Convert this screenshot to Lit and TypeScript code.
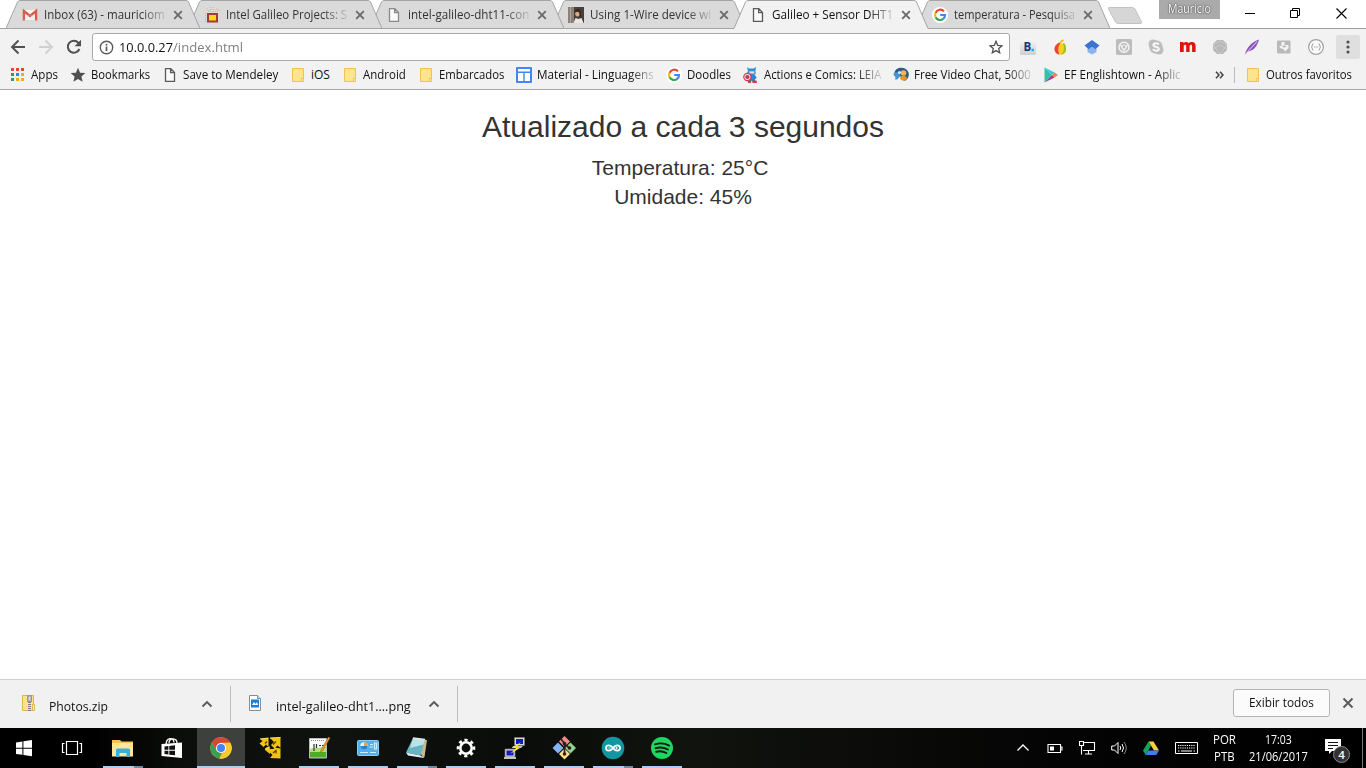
import { LitElement, html, svg, css, nothing } from "lit";
import { customElement, property } from "lit/decorators.js";
import { classMap } from "lit/directives/class-map.js";

/* A label whose glyphs are condensed or widened to fill a given width. */
@customElement("fit-text")
class FitText extends LitElement {
  @property({ type: Number }) w = 0;
  @property() text = "";
  static styles = css`
    :host { display: inline-block; white-space: pre; flex: none; }
    span { display: inline-block; transform-origin: 0 50%; }
  `;
  render() {
    return html`<span>${this.text}</span>`;
  }
  updated() {
    const el = this.renderRoot.querySelector("span") as HTMLElement;
    this.style.width = this.w + "px";
    el.style.transform = `scaleX(${this.w / el.offsetWidth})`;
  }
}

const icon = (w: number, h: number, body: unknown) =>
  html`<svg width=${w} height=${h} viewBox="0 0 ${w} ${h}">${body}</svg>`;

const docIcon = (c: string) => icon(16, 16, svg`<path d="M3.5 1.7h5.3l3.7 3.8v8.8h-9zM8.6 1.7v4h3.9" fill="#fafafa" stroke=${c} stroke-width="1.3"/>`);
const googleIcon = icon(16, 16, svg`<circle cx="8" cy="8" r="8" fill="#fff"/>
  <g fill="none" stroke-width="2.2"><path d="M12 4.4A5 5 0 0 0 3.6 5.8" stroke="#ea4335"/><path d="M3.6 5.7a5 5 0 0 0 0 4.6" stroke="#fbbc05"/><path d="M3.6 10.2a5 5 0 0 0 7.7 1.6" stroke="#34a853"/><path d="M11.2 11.9A5 5 0 0 0 13 8H8.2" stroke="#4285f4"/></g>`);
const gmailIcon = icon(16, 16, svg`<path d="M2 3h12v10H2z" fill="#f4f4f4"/><path d="M1.9 13.5V4L8 9l6.1-5v9.5" fill="none" stroke="#db5a4b" stroke-width="2.3"/><path d="M3 12.6l3.6-4M13 12.6l-3.6-4" stroke="#ddd"/>`);
const chipIcon = icon(16, 16, svg`<rect x="3" y="6" width="11" height="9.500" fill="#a33b35"/><rect x="5" y="8" width="7" height="5.500" fill="#ffd51e"/><path d="M3 1l2 4M6 0l1 5M9 5V0M11 5l2-4M1.500 6v9M15 2l-2 3" stroke="#dfb070" stroke-dasharray="1 1"/>`);
const photoIcon = icon(16, 16, svg`<path d="M0 0h16v16H0z" fill="#4a403a"/><path d="M0 0h6v16H0z" fill="#8d8277"/><path d="M2 0h1v16H2z" fill="#b0a698"/><ellipse cx="9.6" cy="6" rx="2.5" ry="3.4" fill="#d9a98e"/><path d="M6.5 6c0-5 6-5 6.2-1 .4 4 .6 6 .6 6l-1.8-2c.8-4-2-5-3-4z" fill="#37241d"/><path d="M5.5 16l2-5 3 1 3-1 2 5z" fill="#ede7e4"/>`);
const folderIcon = icon(16, 16, svg`<path d="M2.500 1.500h11v13h-11z" fill="#ffe48e" stroke="#ecc550"/><path d="M11.500 11.500h2v3h-2z" fill="#fff0b8" stroke="#ecc550"/><path d="M14.500 10v5" stroke="#f2f2f2"/>`);
const appsIcon = icon(16, 16, svg`${["#ea4335", "#ea4335", "#ea4335", "#2f9e57", "#2a86f0", "#f9ab11", "#2f9e57", "#f9ab11", "#f9ab11"].map(
  (c, i) => svg`<rect x=${1 + (i % 3) * 5} y=${1 + Math.floor(i / 3) * 5} width="3" height="3" fill=${c}/>`)}`);
const starSolid = icon(16, 16, svg`<path d="M8 .8l2.1 4.9 5.3.4-4 3.5 1.2 5.2L8 12l-4.6 2.8 1.2-5.2-4-3.5 5.3-.4z" fill="#4f4f4f"/>`);
const tableIcon = icon(16, 16, svg`<rect width="16" height="16" rx="1" fill="#4285f4"/><path d="M2 2h12v2.500H2zM2 6h5.300v8H2zM8.700 6H14v8H8.700z" fill="#fff"/>`);
const captainIcon = icon(16, 16, svg`<path d="M4 0l2 1.400h4.500L13 0l-.6 4 .4 3-3 1.500h-3L4.200 6 5 4z" fill="#2c8fe0"/><path d="M6.300 4.300h5v2.200h-5z" fill="#f5dcc4"/><path d="M5 8h7l1.800 3-1.600 1-.2 3H9.400l-.6-1.600L8 15H5z" fill="#2b86d4"/><path d="M9.500 13.500h4l.5 2.500H9.500zM5 14h3v2H5z" fill="#d53b3f"/><circle cx="4.400" cy="10" r="4.200" fill="#d23b48"/><circle cx="4.400" cy="10" r="3" fill="#f6e7e7"/><circle cx="4.400" cy="10" r="2.100" fill="#c5323e"/><circle cx="4.400" cy="10" r="1" fill="#4f6fae"/>`);
const chatIcon = icon(16, 16, svg`<path d="M1.500 6C2 1 8-.5 12 1.500c4 2.500 5 6 2.600 10L12 14 7 9z" fill="#2d5d83"/><path d="M.6 6L6 5l1.500 4-3.400 3.500L2 12.600 2.500 10 .8 8.500z" fill="#4a96c8"/><circle cx="10.500" cy="6" r="2.800" fill="#f2b35a"/><path d="M7 12c0-4.200 7-4.200 7 0l-3.500 2z" fill="#ee9422"/><circle cx="6.500" cy="5.500" r="1.600" fill="#d3e8f4"/>`);
const playIcon = icon(16, 16, svg`<path d="M1.500.5v15L9 8z" fill="#35bfa7"/><path d="M1.500.5L9 8l2.600-2.400z" fill="#38c8dc"/><path d="M1.500 15.500L9 8l2.600 2.500z" fill="#a53d86"/><path d="M11.600 5.600L15 8l-3.400 2.500L9 8z" fill="#f2814c"/>`);
const closeX = icon(10, 10, svg`<path d="M1.200 1.200l7.600 7.600M8.800 1.200L1.200 8.800" stroke="currentColor" stroke-width="1.900"/>`);
const chevronUp = icon(12, 8, svg`<path d="M1.500 6.500L6 2l4.500 4.500" fill="none" stroke="#5a5a5a" stroke-width="1.900"/>`);

const tabs = [
  { t: "Inbox (63) - mauriciom", i: gmailIcon },
  { t: "Intel Galileo Projects: S", i: chipIcon },
  { t: "intel-galileo-dht11-con", i: docIcon("#8a8a8a") },
  { t: "Using 1-Wire device wi", i: photoIcon },
  { t: "Galileo + Sensor DHT1", i: docIcon("#5a5a5a"), on: true },
  { t: "temperatura - Pesquisa", i: googleIcon },
];

const bookmarks = [
  { t: "Apps", w: 27, i: appsIcon },
  { t: "Bookmarks", w: 59, i: starSolid },
  { t: "Save to Mendeley", w: 95, i: docIcon("#5a5a5a") },
  { t: "iOS", w: 19, i: folderIcon },
  { t: "Android", w: 43, i: folderIcon },
  { t: "Embarcados", w: 65, i: folderIcon },
  { t: "Material - Linguagens", w: 117, i: tableIcon, fade: true },
  { t: "Doodles", w: 44, i: googleIcon },
  { t: "Actions e Comics: LEIA", w: 117, i: captainIcon, fade: true },
  { t: "Free Video Chat, 5000", w: 117, i: chatIcon, fade: true },
  { t: "EF Englishtown - Aplic", w: 117, i: playIcon, fade: true },
];

const extensions = [
  svg`<defs><linearGradient id="bg" x2="0" y2="1"><stop stop-color="#f6f6f6"/><stop offset="1" stop-color="#cfcfcf"/></linearGradient></defs><rect width="16" height="16" rx="1.500" fill="url(#bg)"/><text class="bk" x="3.500" y="12" fill="#0c3b7c">B</text><rect x="11.500" y="9.800" width="2.300" height="2.400" fill="#1ba3e0"/>`,
  svg`<path d="M9 3c-4 1-7 4-6.500 8 .5 3 3 4.500 5.500 4.500-2-4-.5-8 1-12.500z" fill="#ee4136"/><path d="M9 3C5.500 8 5.500 13 8 15.500c4 .5 6.500-2.500 5.500-6C12.700 7 11 6 9 3z" fill="#ffd21f"/><path d="M10.500 4c3.500 0 3.500 3 3.500 6.500S11 15.500 8.500 15.500c4-2.500 4-7 2-11.500z" fill="#9dc41b"/><path d="M8 3.500C8 1.500 10 .3 12 .5 12 2.500 10 3.700 8 3.500z" fill="#e6c32a"/>`,
  svg`<path d="M3.500 7h9v6l-4.500 2.500L3.500 13z" fill="#8ab4ee"/><path d="M8 1l7.500 5.500L11 10.500C10.500 7 5.500 7 5 10.500L.5 6.500z" fill="#3b73d1"/>`,
  svg`<rect width="16" height="16" rx="1.500" fill="#bcbcbc"/><circle cx="8" cy="8.300" r="5" fill="none" stroke="#f4f4f4" stroke-width="1.500"/><path d="M3.500 6L8 13.500 12.500 6z" fill="#e6e6e6"/><circle cx="8" cy="8" r="2" fill="#bcbcbc" stroke="#f4f4f4"/>`,
  svg`<circle cx="5" cy="5" r="4.500" fill="#bdbdbd"/><circle cx="11" cy="11" r="4.500" fill="#bdbdbd"/><circle cx="8" cy="8" r="6.700" fill="#bdbdbd"/><path d="M10.800 5.600C10 3.700 5.400 3.800 5.400 6c0 2.600 5.400 1.300 5.400 4 0 2.200-5 2.300-5.700 0" fill="none" stroke="#fafafa" stroke-width="1.900"/>`,
  svg`<path d="M0 3h3.400v1.200C5 2.600 7.600 2.600 8.600 4.200 10.500 2.200 15.600 2.200 15.600 6.500V13h-3.500V7c0-1.800-2.500-1.500-2.500.3V13H6.200V7c0-1.800-2.500-1.500-2.500.3V13H0z" fill="#e3120b"/>`,
  svg`<path d="M5 1h6l4 4v6l-4 4H5l-4-4V5z" fill="#b8b8b8"/><path d="M1 6l7-4 7 4-7 9zM1 10l7-4 7 4" fill="none" stroke="#cdcdcd" stroke-width=".9"/>`,
  svg`<path d="M1 15C3 8 8 3 15 .5 13.500 7 9.500 12 4 12.500z" fill="#8d55bc"/><path d="M1 15.500L13 2.500" stroke="#d5b9ea" stroke-width="1.100"/>`,
  svg`<rect x="1" y="1.500" width="13.500" height="13" rx="1" fill="#b9b9b9"/><path d="M5.500 3h3v3h4v3L9 12.500 7.500 10 5 9.500 3 7h2.500z" fill="#f4f4f4"/><path d="M8 6v3M6.500 7.500h4" stroke="#b9b9b9"/>`,
  svg`<circle cx="8" cy="8" r="7.400" fill="#fafafa" stroke="#a3a3a3" stroke-width="1.200"/><path d="M5.500 4.800c-2 0-.5 2.500-2.200 3.200 1.700.7.200 3.200 2.200 3.200M10.500 4.800c2 0 .5 2.500 2.200 3.200-1.700.7-.2 3.200-2.200 3.200M6 8h1m.7 0h1m.7 0h.8" fill="none" stroke="#999"/>`,
];

const tasks: { c: string; i: unknown }[] = [
  { c: "first", i: svg`<path d="M4 6.400l6.400-.9v6.200H4zM11.400 5.300L20 4v7.700h-8.600zM4 12.700h6.400v6.100L4 18zM11.400 12.700H20V20.300l-8.600-1.300z" fill="#fff"/>` },
  { c: "second", i: svg`<path d="M6.500 5.500h11v13h-11zM4.500 7.500h-2v9h2M19.500 7.500h2v9h-2" fill="none" stroke="#fff" stroke-width="1.200"/>` },
  { c: "run multi", i: svg`<path d="M1 4h8l1.500 1.500H22V20H1z" fill="#f1c54c"/><path d="M1 7h21v13.500H1z" fill="#ffe69a"/><path d="M5 21v-7q0-1.500 1.500-1.500h11q1.500 0 1.500 1.500v7h-3.500v-4h-7v4z" fill="#35b1e1"/>` },
  { c: "", i: svg`<path d="M1.500 8L22 6.500V22L1.500 20z" fill="#fff"/><path d="M6 9C6 1 14 1 14 6.500M9 7c0-6 8-5 8 0" fill="none" stroke="#fff" stroke-width="1.300"/><path d="M4.500 10.400l3.900-.4v3.800H4.500zM9.300 9.900l5.700-.6v4.500H9.300zM4.500 14.700h3.900v3.800l-3.900-.4zM9.300 14.700H15v4.600l-5.700-.6z" fill="#111"/>` },
  { c: "run current", i: svg`<circle cx="12" cy="12" r="10.700" fill="#fbc02d"/><path d="M2.700 6.700A10.700 10.700 0 0 1 21.300 6.700L12 7.200 7 13.500z" fill="#d84637"/><path d="M2.700 6.700l5 8 5.300 2-2.800 5.900A10.700 10.700 0 0 1 2.700 6.700z" fill="#3a9f50"/><path d="M21.300 6.700H12l4.700 7.300-5.700 8.700A10.700 10.700 0 0 0 21.300 6.700z" fill="#fdc92e"/><circle cx="12" cy="12" r="5" fill="#fff"/><circle cx="12" cy="12" r="4" fill="#4285f4"/>` },
  { c: "", i: svg`<path d="M2 3l8.500-1v9L8 8.500 5.500 11 1.500 7.500 4.500 5zM12 2l10.500-.500V12l-3-2.500-3 3-3.500-3.500 3-3zM7 12.500l4.500-2 .5 2.500h3.500l1-1.500 6 1V22.500L12 22l2.500-3-2.500-2.500v1.500l-5-4z" fill="#f4c40c"/><path d="M2 3l8.500-1M12 2l10.500-.500M7.500 12.500l4-1.500" stroke="#ffe65c"/><path d="M15 17l3-2.500v3M9 5.500l-2 2M18 5.500l-3 3" stroke="#4c3c05" stroke-width="1.200" fill="none"/>` },
  { c: "run", i: svg`<path d="M2.500 2.500h17v19.500h-17z" fill="#f9f9f9" stroke="#b9b9b9"/><path d="M3 13l16-2v10.500H3z" fill="#4cae24"/><path d="M3 13l16-2v5H3z" fill="#b4e077"/><path d="M4 4.500h14" stroke="#888" stroke-dasharray="1 1"/><path d="M7 8v7M9.500 8v4M12 9.500h2m1 0h2" stroke="#333" stroke-width="1.200"/><path d="M21.500 1l1.500 1-7.500 13-2 1.500.5-2.500z" fill="#f1a32c" stroke="#9c5c12" stroke-width=".6"/>` },
  { c: "run", i: svg`<rect x="1.500" y="4.500" width="21" height="15" rx="1" fill="#4fb2ef" stroke="#86cdf8"/><circle cx="8" cy="10" r="3.700" fill="#eef8ff"/><path d="M8 10V6.300A3.700 3.700 0 0 1 11.700 10z" fill="#f2a12d"/><path d="M8 10h-3.700A3.700 3.700 0 0 0 11.700 10z" fill="#2f7fd0"/><path d="M14 8.500h3M13.500 11h3.500M18.500 7h2v6h-2zM4 16.500h8M14 16.500h6" stroke="#d2eeff" stroke-width="1.200" fill="none"/>` },
  { c: "run multi", i: svg`<path d="M8 2.500l14 1.500-2.500 17-1.500 1z" fill="#c9b68b"/><path d="M8 2l12 1.500-4.500 16L1 16.500z" fill="#68b4c3"/><path d="M8 2l12 1.500-1.500 5L5 12z" fill="#b8e3e9"/><path d="M1 16.500l14.500 3 3.500 2.500-16-2.500z" fill="#e7eff0"/><path d="M8 2l12 1.500" stroke="#e6e6e6" stroke-width="1.500"/>` },
  { c: "run", i: svg`<g fill="none" stroke="#fff"><circle cx="12" cy="12" r="5.700" stroke-width="2.600"/><circle cx="12" cy="12" r="8" stroke-width="2.600" stroke-dasharray="3.100 3.183" transform="rotate(-101 12 12)"/></g>` },
  { c: "run", i: svg`<path d="M11.500 1.500h10v8h-10zM2 13h10v8H2z" fill="#d9d9d4" stroke="#77776f" stroke-width=".7"/><path d="M13 3h7v5h-7zM3.500 14.500h7v5h-7z" fill="#1017c7"/><path d="M10 10h10l-2 2h-9zM1 21h12v2H1z" fill="#c4c4bd"/><path d="M18 6l-9 6h4l-6 6 10-6h-4z" fill="#ffe92e"/>` },
  { c: "run", i: svg`<path d="M12.500 0l5.500 5.500-5.500 5.500L7 5.500z" fill="#f28b88"/><path d="M18.500 6.500L24 12l-5.500 5.500L13 12z" fill="#93d391"/><path d="M6 6.500l5.500 5.500L6 17.500.5 12z" fill="#83b4f4"/><path d="M12.500 12.500L18 18l-5.500 5.500L7 18z" fill="#ffe08a"/><path d="M9 3l3.500 4.500V18M12.500 8l5 4" fill="none" stroke="#2b201b" stroke-width="1.700"/><circle cx="12.500" cy="7.500" r="1.800" fill="#2b201b"/><circle cx="12.500" cy="18" r="1.800" fill="#2b201b"/><circle cx="17.500" cy="12" r="1.800" fill="#2b201b"/>` },
  { c: "run multi", i: svg`<circle cx="12" cy="12" r="11.300" fill="#1396a0"/><path d="M12 12C9.500 8.300 5 8.600 5 12s4.500 3.700 7 0 7-3.400 7 0-4.500 3.700-7 0z" fill="none" stroke="#fff" stroke-width="1.800"/><path d="M7.300 12h2.500M14.300 12h2.500M15.500 10.800v2.400" stroke="#fff" stroke-width=".8"/>` },
  { c: "run", i: svg`<circle cx="12" cy="12" r="11" fill="#1ed760"/><path d="M5 8.300c5-1.500 10-1 14.200 1.300M5.700 12.200c4.300-1.200 8.500-.7 12.200 1.300M6.200 15.700c3.800-.8 7.200-.4 10.200 1.300" fill="none" stroke="#101a10" stroke-width="1.900" stroke-linecap="round"/>` },
];

@customElement("app-root")
class AppRoot extends LitElement {
  static styles = css`
    :host {
      display: flex; flex-direction: column; width: 1366px; height: 768px; overflow: hidden;
      background: #fff; font: 12px/16px "Open Sans", "Noto Sans", sans-serif; color: #111;
    }
    * { box-sizing: border-box; }
    svg { display: block; flex: none; }

    .strip { flex: none; display: flex; height: 29px; padding-left: 6px; background: linear-gradient(#a0a0a0, #a0a0a0) bottom / 100% 1px no-repeat; }
    .tab { display: grid; flex: none; width: 194px; margin-right: -12px; height: 29px; }
    .tab > * { grid-area: 1 / 1; }
    .tab:nth-child(1) { z-index: 5; }
    .tab:nth-child(2) { z-index: 4; }
    .tab:nth-child(3) { z-index: 3; }
    .tab:nth-child(4) { z-index: 2; }
    .tab.on { z-index: 6; }
    .tab:nth-child(6) { z-index: 1; }
    .tab-body { display: flex; align-items: center; height: 30px; padding-left: 16px; gap: 6px; color: #333; }
    .tab.on .tab-body { color: #111; }
    .tab-body .title { margin-right: 2px; }
    .tab-close { color: #6b6b6b; display: block; }
    .fade { -webkit-mask-image: linear-gradient(90deg, #000 calc(100% - 24px), rgba(0,0,0,.15)); mask-image: linear-gradient(90deg, #000 calc(100% - 24px), rgba(0,0,0,.15)); }
    .new-tab { margin-left: 8px; }
    .user { display: flex; justify-content: center; margin-left: 16px; width: 61px; height: 19px; background: #aaa; color: #fff; line-height: 18px; text-shadow: 0 0 2px #333, 0 0 1px #444; }
    .win { display: flex; gap: 35px; padding: 8px 0 0 25px; }

    .bar { flex: none; display: flex; align-items: center; height: 35px; padding: 1px 0 0 10px; background: #f2f2f2; }
    .nav { display: flex; align-items: center; gap: 12px; width: 82px; }
    .omni { display: flex; align-items: center; width: 918px; height: 28px; padding: 0 6px; border: 1px solid #a9a9a9; border-radius: 3px; background: #fff; font-size: 13.5px; }
    .omni fit-text:first-of-type { margin-left: 5px; }
    .path { color: #808080; }
    .star { margin-left: auto; }
    .ext { display: flex; padding-left: 10px; gap: 16px; }
    .bk { font: bold 11.5px "Open Sans", sans-serif; }
    .menu { display: grid; place-items: center; width: 24px; height: 24px; margin-left: 12px; border-radius: 2px; background: #dfdfdf; }

    .marks { flex: none; display: flex; align-items: center; gap: 12px; height: 26px; padding: 0 0 4px 10px; background: #f2f2f2; border-bottom: 1px solid #aaa; }
    .mark { display: flex; align-items: center; gap: 5px; }
    .more { margin-left: 22px; }
    .rule { width: 1px; height: 16px; background: #bbb; margin-left: -2px; }
    .rule + .mark { margin-left: -2px; }

    .page { flex: 1; padding-top: 20px; text-align: center; color: #333; font-family: "Liberation Sans", Arial, sans-serif; }
    h2 { margin: 0 0 10px; font-size: 30px; line-height: 33px; font-weight: 400; }
    p { margin: 0; font-size: 21px; line-height: 29.4px; white-space: pre; }

    .shelf { flex: none; display: flex; height: 49px; background: #f1f1f1; border-top: 1px solid #cfcfcf; font-size: 13px; }
    .dl { display: flex; height: 36px; margin-top: 6px; border-right: 1px solid #bdbdbd; }
    .dl.a { width: 231px; padding-left: 20px; }
    .dl.b { width: 227px; padding-left: 16px; }
    .dl .ico { margin-top: 9px; }
    .dl fit-text { margin: 12px 0 0 13px; }
    .dl .up { margin: 14px 17px 0 auto; }
    .all { display: grid; place-items: center; width: 97px; height: 28px; margin: 9px 0 0 auto; border: 1px solid #b5b5b5; border-radius: 3px; background: #fbfbfb; font-size: 12.5px; }
    .shelf-x { margin: 17px 12px 0; }

    .taskbar { flex: none; display: flex; height: 40px; background: linear-gradient(90deg, #000 0, #000 90px, #0b0d0a 180px, #10120f 330px, #0a0c09 520px, #11130f 690px, #0a0b09 900px, #030403 1050px, #000 100%); color: #fff; }
    .task { display: flex; flex-direction: column; align-items: center; width: 48px; margin-right: 1px; padding-top: 8px; }
    .task.first { margin-right: 0; }
    .task.second { margin-right: 3px; }
    .task.current { background: #3e403e; }
    .line { width: 40px; height: 2px; margin-top: 6px; background: #a9cdf6; }
    .current .line { width: 48px; }
    .multi .line { background: linear-gradient(90deg, #a9cdf6 31px, #708aa8 31px); }
    .tray { display: flex; align-items: center; margin-left: auto; }
    .tray > svg { margin-right: 16px; }
    .tray > svg:first-child { margin-right: 17px; }
    .tray > svg:nth-child(3) { margin-right: 15px; }
    .lang, .clock { display: flex; flex-direction: column; align-items: center; height: 40px; padding-top: 4px; gap: 1px; }
    .lang { margin-left: -1px; }
    .clock { margin-left: 12px; width: 60px; }
    .note { display: grid; width: 26px; height: 26px; margin: 3px 0 0 16px; }
    .note svg { grid-area: 1 / 1; }
    .badge { grid-area: 1 / 1; place-self: end; display: grid; place-items: center; width: 17px; height: 17px; border: 1px solid #888; border-radius: 50%; background: #333; font-size: 11.5px; font-weight: 600; }
    .peek { width: 1px; height: 40px; margin: 0 3px 0 12px; background: #777; }
  `;

  private tab(t: (typeof tabs)[number]) {
    return html`<div class=${classMap({ tab: true, on: !!t.on })}>
      ${icon(194, 29, svg`<path d="M0 28.500L11.500 2Q12.500 .5 14 .5H180Q181.500 .5 182.500 2L194 28.500${t.on ? "V29H0z" : ""}" fill=${t.on ? "#f2f2f2" : "#dadada"}/>
        <path d="M0 28.500L11.500 2Q12.500 .5 14 .5H180Q181.500 .5 182.500 2L194 28.500${t.on ? "" : "z"}" fill="none" stroke="#a5a5a5"/>`)}
      <div class="tab-body">${t.i}<fit-text class="title fade" w="121" .text=${t.t}></fit-text><span class="tab-close">${closeX}</span></div>
    </div>`;
  }

  private mark(b: { t: string; w: number; i: unknown; fade?: boolean }) {
    return html`<div class="mark">${b.i}<fit-text class=${b.fade ? "fade" : ""} w=${b.w} .text=${b.t}></fit-text></div>`;
  }

  render() {
    return html`
      <div class="strip">
        ${tabs.map((t) => this.tab(t))}
        <svg class="new-tab" width="37" height="28" viewBox="0 0 37 28"><path d="M2.500 9Q1.500 7.500 3.500 7.500H26q2 0 3 1.500L35.500 22q.7 1.500-1.500 1.500H12.500q-2 0-3-1.500z" fill="#d6d6d6" stroke="#c2c2c2"/></svg>
        <div class="user"><fit-text w="43" .text=${"Mauricio"}></fit-text></div>
        <div class="win">
          ${icon(10, 10, svg`<path d="M0 5.500h10" stroke="#000"/>`)}
          ${icon(11, 11, svg`<path d="M.5 2.500h7v7h-7zM2.500 2.500v-2h7v7h-2" fill="none" stroke="#000"/>`)}
          ${icon(11, 11, svg`<path d="M.5 .5l10 10M10.500 .5l-10 10" stroke="#000" stroke-width="1.100"/>`)}
        </div>
      </div>
      <div class="bar">
        <div class="nav">
          ${icon(16, 16, svg`<path d="M15 8H2.500M8.500 1.500L2 8l6.500 6.500" fill="none" stroke="#505050" stroke-width="1.900"/>`)}
          ${icon(16, 16, svg`<path d="M1 8h12.500M7.500 1.500L14 8l-6.500 6.500" fill="none" stroke="#d0d0d0" stroke-width="1.900"/>`)}
          ${icon(16, 16, svg`<path d="M13.400 10A6 6 0 1 1 12.300 3.700L14 5.400" fill="none" stroke="#505050" stroke-width="2"/><path d="M15 .8v6.400H8.600z" fill="#505050"/>`)}
        </div>
        <div class="omni">
          ${icon(15, 15, svg`<circle cx="7.500" cy="7.500" r="6.200" fill="none" stroke="#5a5a5a" stroke-width="1.400"/><path d="M7.500 6.500V11M7.500 3.800v1.600" stroke="#5a5a5a" stroke-width="1.700"/>`)}
          <fit-text w="54" .text=${"10.0.0.27"}></fit-text><fit-text class="path" w="70" .text=${"/index.html"}></fit-text>
          <svg class="star" width="14" height="14" viewBox="0 0 14 14"><path d="M7 1.300l1.700 4 4.300.4-3.300 2.900 1 4.200L7 10.600l-3.700 2.200 1-4.200L1 5.700l4.300-.4z" fill="none" stroke="#505050" stroke-width="1.300"/></svg>
        </div>
        <div class="ext">${extensions.map((e) => icon(16, 16, e))}</div>
        <div class="menu">${icon(4, 14, svg`<circle cx="2" cy="2" r="1.600" fill="#505050"/><circle cx="2" cy="7" r="1.600" fill="#505050"/><circle cx="2" cy="12" r="1.600" fill="#505050"/>`)}</div>
      </div>
      <div class="marks">
        ${bookmarks.map((b) => this.mark(b))}
        <svg class="more" width="9" height="8" viewBox="0 0 9 8"><path d="M1 .7L4 4 1 7.300M5 .7L8 4 5 7.300" fill="none" stroke="#444" stroke-width="1.600"/></svg>
        <div class="rule"></div>
        ${this.mark({ t: "Outros favoritos", w: 86, i: folderIcon })}
      </div>
      <div class="page">
        <h2>Atualizado a cada 3 segundos</h2>
        <p>Temperatura: 25°C </p>
        <p>Umidade: 45%</p>
      </div>
      <div class="shelf">
        <div class="dl a">
          <svg class="ico" width="16" height="17" viewBox="0 0 16 17"><path d="M2.500 .5h11v15h-11z" fill="#ffe28a" stroke="#dcb64e"/><path d="M12.500 9.500h2v6h-2z" fill="#ffefb9" stroke="#dcb64e"/><path d="M7 0h5v7H7z" fill="#9a9a9a"/><path d="M8.500 1.500h2v4h-2z" fill="#ddd"/><path d="M9.500 7v9" stroke="#7d7d7d" stroke-width="3" stroke-dasharray="1 1"/></svg>
          <fit-text w="59" .text=${"Photos.zip"}></fit-text>
          <span class="up">${chevronUp}</span>
        </div>
        <div class="dl b">
          <svg class="ico" width="16" height="17" viewBox="0 0 16 17"><path d="M2.500 .5h8l3 3v12h-11z" fill="#fff" stroke="#8b8b8b"/><path d="M10.500 .5v3h3" fill="#ddd" stroke="#8b8b8b"/><path d="M4 4.500h8v8H4z" fill="#1580db"/><path d="M5 10l2-3 1.500 2L10 7l1 3z" fill="#fff"/></svg>
          <fit-text w="135" .text=${"intel-galileo-dht1....png"}></fit-text>
          <span class="up">${chevronUp}</span>
        </div>
        <div class="all"><fit-text w="65" .text=${"Exibir todos"}></fit-text></div>
        <svg class="shelf-x" width="12" height="12" viewBox="0 0 12 12"><path d="M1.500 1.500l9 9M10.500 1.500l-9 9" stroke="#5a5a5a" stroke-width="1.900"/></svg>
      </div>
      <div class="taskbar">
        ${tasks.map((t) => html`<div class="task ${t.c}">${icon(24, 24, t.i)}${t.c.includes("run") ? html`<div class="line"></div>` : nothing}</div>`)}
        <div class="tray">
          ${icon(14, 16, svg`<path d="M1.500 10.500L7 5l5.500 5.500" fill="none" stroke="#fff" stroke-width="1.300"/>`)}
          ${icon(16, 16, svg`<path d="M1 4.500h12.500v8H1zM14 7h1v3h-1" fill="none" stroke="#fff" stroke-width="1.100"/><path d="M3 6.500h4v4H3z" fill="#fff"/>`)}
          ${icon(17, 16, svg`<path d="M4.500 2.500h11v8H4M9.500 10.500v3M6 14h7M.5 1.500h4v4h-4zM2.500 6v8.500" fill="none" stroke="#fff" stroke-width="1.100"/>`)}
          ${icon(16, 16, svg`<path d="M.7 6h2.800L7 2.500v11L3.500 10H.7z" fill="none" stroke="#fff"/><path d="M9 6q1.500 2 0 4M11 4q3 4 0 8" fill="none" stroke="#fff"/><path d="M13 2q4.500 6 0 12" fill="none" stroke="#888"/>`)}
          ${icon(16, 16, svg`<path d="M5.500 1.500h5L16 10.500h-5z" fill="#ffcf3e"/><path d="M5.500 1.500L8 5.800 2.700 15 0 10.500z" fill="#11a45f"/><path d="M5.300 10.500H16L13.300 15H2.700z" fill="#3f7de8"/>`)}
          ${icon(23, 16, svg`<path d="M.5 2.500h22v11H.5z" fill="none" stroke="#fff"/><path d="M3 5.500h17M3 8h17" stroke="#fff" stroke-width="1.200" stroke-dasharray="1.200 1"/><path d="M3 11h1.500M6 11h11M18.500 11H20" stroke="#fff"/>`)}
          <div class="lang"><fit-text w="23" .text=${"POR"}></fit-text><fit-text w="21" .text=${"PTB"}></fit-text></div>
          <div class="clock"><fit-text w="27" .text=${"17:03"}></fit-text><fit-text w="59" .text=${"21/06/2017"}></fit-text></div>
          <div class="note">${icon(18, 18, svg`<path d="M1 2h16v12H8l-3 3v-3H1z" fill="#fff"/><path d="M4 5.500h10M4 8.500h10M4 11.500h5" stroke="#111"/>`)}<span class="badge">4</span></div>
          <div class="peek"></div>
        </div>
      </div>`;
  }
}
